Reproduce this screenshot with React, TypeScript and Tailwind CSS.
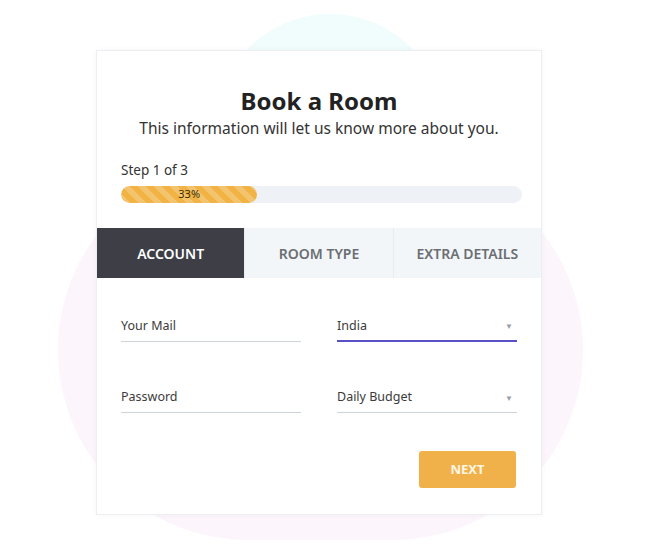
const tabs = ["Account", "Room Type", "Extra Details"];

function Field({ label, select, active }: { label: string; select?: boolean; active?: boolean }) {
  return (
    <div
      className={
        "flex h-[30px] items-center justify-between border-b " +
        (active ? "border-b-2 border-[#5b4fc7]" : "border-[#cfd3da]")
      }
    >
      <span className="text-[12.5px] text-[#3b3b3b]">{label}</span>
      {select && <span className="mr-1 text-[8px] text-[#9aa0a8]">▼</span>}
    </div>
  );
}

export default function App() {
  return (
    <div
      className="relative h-[548px] w-[650px] overflow-hidden bg-white"
      style={{ fontFamily: '"Noto Sans", "Open Sans", sans-serif' }}
    >
      {/* faint background blobs */}
      <div className="absolute left-[215px] top-[14px] h-[240px] w-[230px] rounded-full bg-[#f1fcfd]" />
      <div className="absolute left-[58px] top-[160px] h-[380px] w-[525px] rounded-full bg-[#fcf6fc]" />

      <div className="relative ml-[96px] mt-[50px] h-[465px] w-[446px] border border-[#eceef1] bg-white shadow-[0_0_6px_rgba(0,0,0,0.04)]">
        <div className="flex flex-col items-center pt-[34px]">
          <h1 className="text-[24px] font-bold leading-[32px] text-[#222]">Book a Room</h1>
          <p className="mt-[0px] text-[15.5px] leading-[22px] text-[#333]">
            This information will let us know more about you.
          </p>
        </div>

        <div className="px-[24px] pt-[22px]">
          <div className="text-[13.5px] leading-[18px] text-[#333]">Step 1 of 3</div>
          <div className="mt-[7px] h-[17px] w-[401px] overflow-hidden rounded-full bg-[#eef1f5]">
            <div
              className="flex h-full items-center justify-center rounded-full text-[11px] text-[#3a2a00]"
              style={{
                width: "34%",
                backgroundColor: "#f0b344",
                backgroundImage:
                  "linear-gradient(45deg, rgba(255,255,255,0.22) 25%, transparent 25%, transparent 50%, rgba(255,255,255,0.22) 50%, rgba(255,255,255,0.22) 75%, transparent 75%, transparent)",
                backgroundSize: "16px 16px",
              }}
            >
              33%
            </div>
          </div>
        </div>

        <div className="mt-[25px] flex h-[50px]">
          {tabs.map((t, i) => (
            <div
              key={t}
              className={
                "flex flex-1 items-center justify-center text-[14px] font-semibold uppercase " +
                (i === 0
                  ? "bg-[#3d3e46] text-white"
                  : "border-l border-[#e9edf1] bg-[#f3f6f9] text-[#6b6e73]")
              }
            >
              {t}
            </div>
          ))}
        </div>

        <div className="grid grid-cols-2 gap-x-[36px] gap-y-[41px] px-[24px] pt-[34px]">
          <Field label="Your Mail" />
          <Field label="India" select active />
          <Field label="Password" />
          <Field label="Daily Budget" select />
        </div>

        <div className="flex justify-end pr-[25px] pt-[38px]">
          <button className="h-[37px] w-[97px] rounded-[3px] bg-[#f0b14a] text-[13px] font-bold text-[#fff6e3]">
            NEXT
          </button>
        </div>
      </div>
    </div>
  );
}
